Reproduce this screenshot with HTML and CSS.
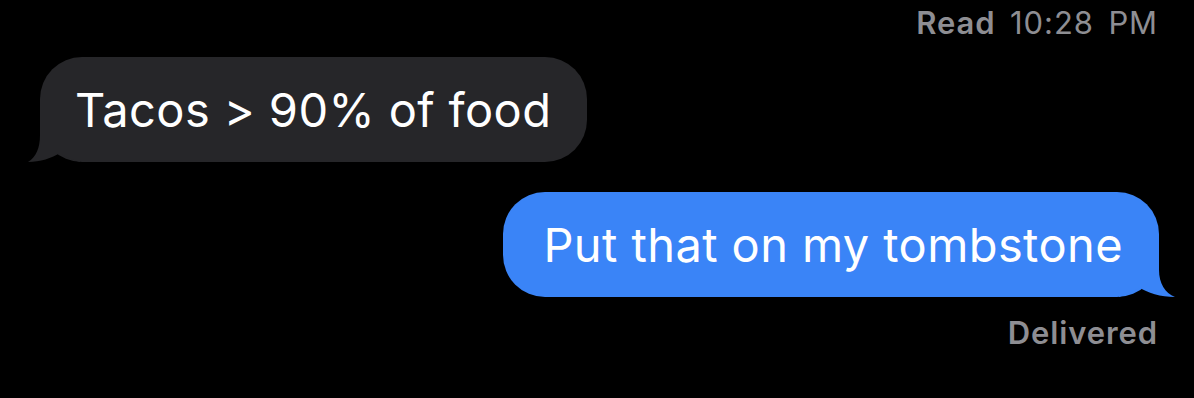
FILE: index.html
```html
<!DOCTYPE html>
<html>
<head>
<meta charset="utf-8">
<link rel="stylesheet" href="styles.css">
</head>
<body>
<div class="thread">
  <div class="meta meta-top"><b>Read</b> 10:28 PM</div>
  <div class="row row-in">
    <div class="bubble bubble-in">
      <span>Tacos &gt; 90% of food</span>
      <svg class="tail tail-in" width="52" height="52" viewBox="-12 -52 52 52" aria-hidden="true">
        <path d="M0 -52 L0 -27 C0 -14 -4 -5 -12 0 C0 0 12 -4 20 -9 C24 -6 30 -3 40 0 L40 -52 Z"/>
      </svg>
    </div>
  </div>
  <div class="row row-out">
    <div class="bubble bubble-out">
      <span>Put that on my tombstone</span>
      <svg class="tail tail-out" width="56" height="52" viewBox="-16 -52 56 52" aria-hidden="true">
        <path d="M0 -52 L0 -27 C0 -14 -6 -4 -16 0 C-2 0 12 -4 20 -10 C24 -6 30 -3 40 0 L40 -52 Z"/>
      </svg>
    </div>
  </div>
  <div class="meta meta-bottom"><b>Delivered</b></div>
</div>
</body>
</html>
```

FILE: styles.css
```css
html, body {
  margin: 0;
  padding: 0;
  background: #000;
}
.thread {
  width: 1194px;
  height: 398px;
  box-sizing: border-box;
  padding: 5px 36px 0 40px;
  display: flex;
  flex-direction: column;
  font-family: Inter, "Noto Sans", sans-serif;
  overflow: hidden;
}
.meta {
  color: #8e8e93;
  font-size: 31px;
  line-height: 36px;
  letter-spacing: 0.9px;
  text-align: right;
}
.meta-top {
  word-spacing: 5px;
  margin-bottom: 16px;
}
.meta b {
  font-weight: 600;
}
.meta-bottom {
  margin-top: 18px;
}
.row {
  display: flex;
}
.row-in {
  justify-content: flex-start;
}
.row-out {
  justify-content: flex-end;
  margin-top: 30px;
  margin-right: -1px;
}
.bubble {
  position: relative;
  height: 105px;
  box-sizing: border-box;
  padding: 0 36px 0 35px;
  border-radius: 42px;
  display: flex;
  align-items: center;
  color: #fff;
  font-size: 47px;
  letter-spacing: 0.4px;
}
.bubble span {
  position: relative;
  z-index: 1;
}
.bubble-in {
  background: #262629;
}
.bubble-out {
  background: #3a84f7;
  padding-left: 40px;
}
.tail {
  position: absolute;
  bottom: 0;
}
.tail-in {
  left: -12px;
  fill: #262629;
}
.tail-out {
  right: -16px;
  transform: scaleX(-1);
  fill: #3a84f7;
}
```
